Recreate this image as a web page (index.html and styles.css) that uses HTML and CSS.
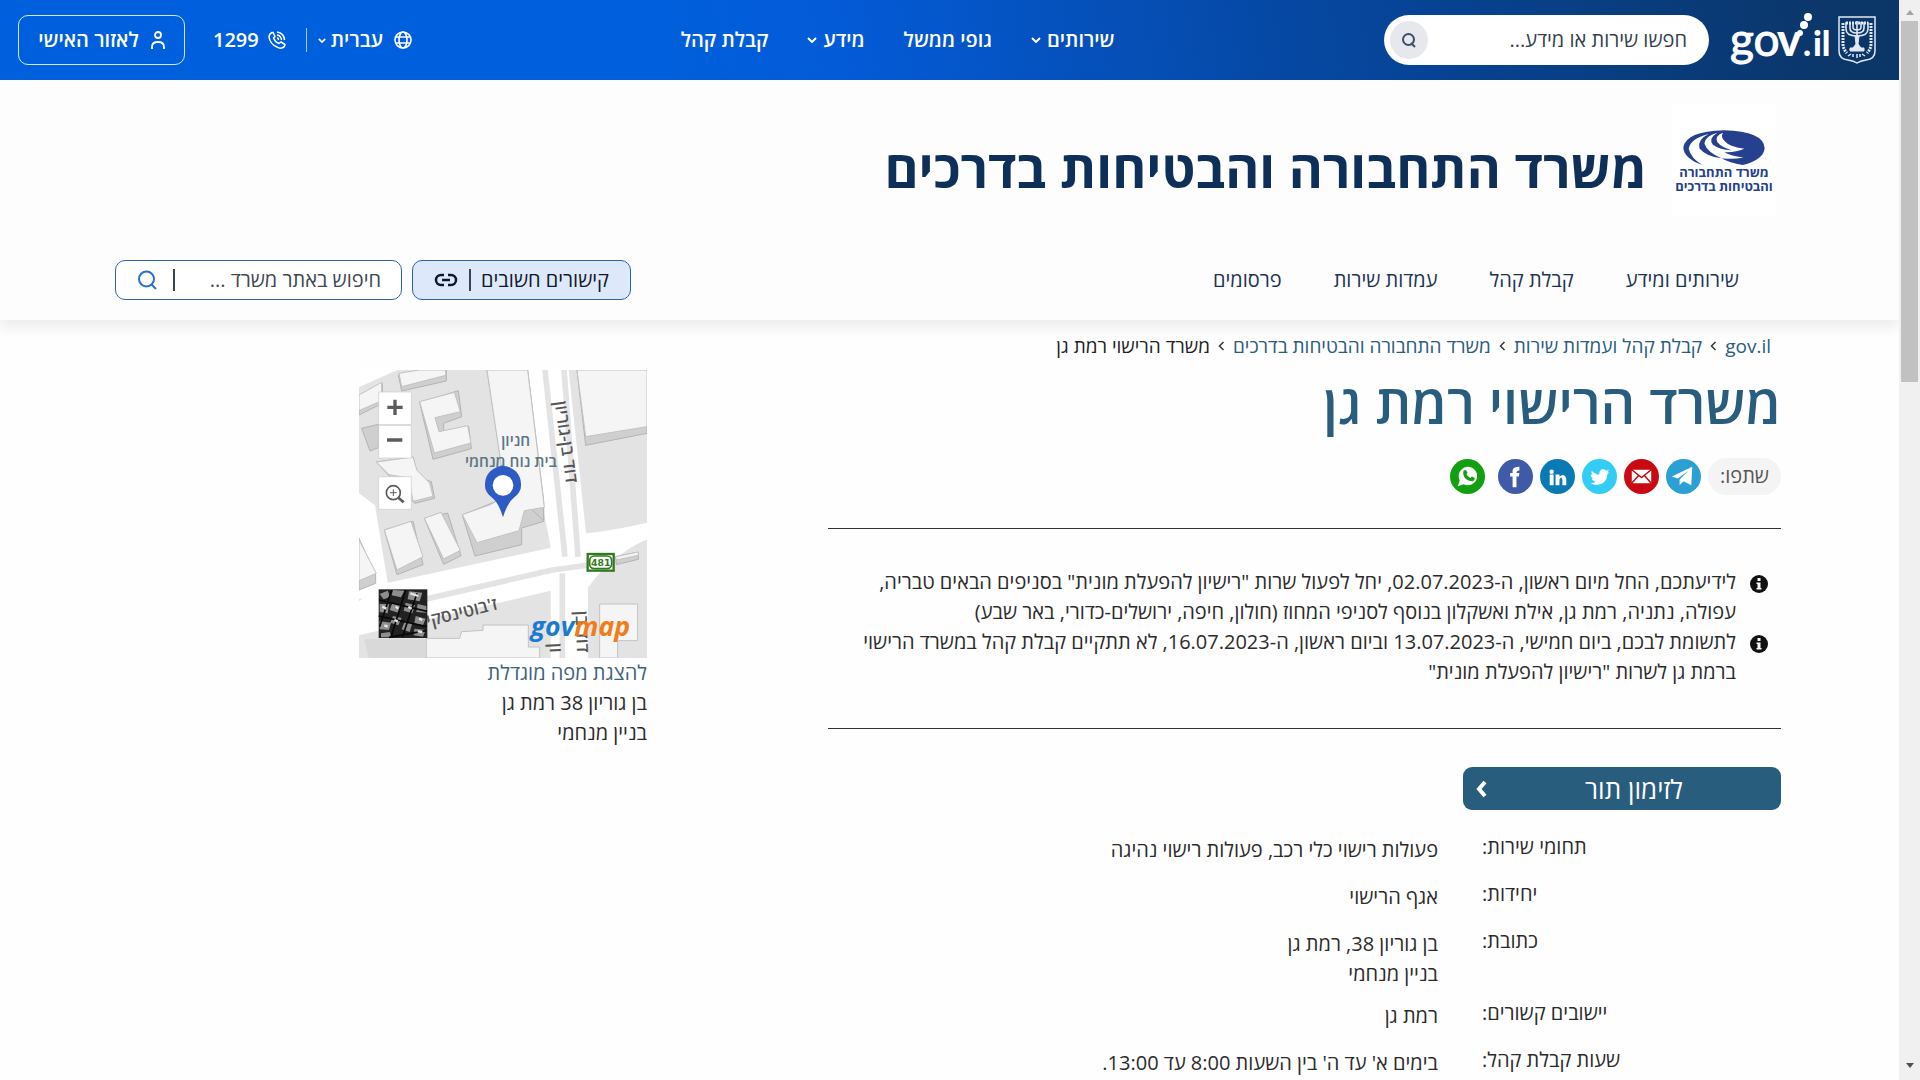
FILE: index.html
```html
<!DOCTYPE html>
<html lang="he">
<head>
<meta charset="utf-8">
<meta name="viewport" content="width=device-width, initial-scale=1">
<title>משרד הרישוי רמת גן</title>
<link rel="stylesheet" href="styles.css">
</head>
<body>
<div class="page" dir="rtl">
  <header class="topbar">
    <div class="topbar-start">
      <a class="brand" href="#" aria-label="gov.il">
        <svg class="emblem" width="38" height="48" viewBox="0 0 38 48" fill="none" stroke="#dfe8f5" aria-hidden="true">
          <path d="M1 1h36v34q0 8-9 9-6 1-9 3-3-2-9-3-9-1-9-9z" stroke-width="1.5"/>
          <path d="M8 6v7q0 7 11 7t11-7V6M12 6v6q0 5 7 5t7-5V6M15 6v5q0 3 4 3t4-3V6M19 5v24" stroke-width="1.6"/>
          <path d="M8 7h22" stroke-width="3" stroke-dasharray="2 1"/>
          <path d="M17 20h4l-1 8 3 4h-8l3-4zM12 32h14v3H12z" fill="#dfe8f5"/>
          <path d="M5 7v21q0 5 4 9M33 7v21q0 5-4 9" stroke-width="3" stroke-dasharray="2 1"/>
          <path d="M10 40l3-2m2 3v-3m4 4v-4m3 3v-3m5 2l-3-2" stroke-width="1.5"/>
        </svg>
        <svg class="govil" width="98" height="54" viewBox="0 0 98 54" direction="ltr" fill="#fff">
          <text class="logo-thin" x="-1" y="43" font-size="46">go</text>
          <text class="logo-bold" x="46" y="43" font-size="46">v</text>
          <text class="logo-bold" x="72" y="43" font-size="34">.</text>
          <text class="logo-bold" x="82" y="43" font-size="34">il</text>
          <circle cx="69" cy="20" r="3"/><circle cx="73" cy="12" r="4"/><circle cx="77" cy="4" r="4"/>
        </svg>
      </a>
      <form class="site-search" role="search">
        <input type="text" aria-label="חיפוש" placeholder="חפשו שירות או מידע...">
        <button type="button" aria-label="חפש">
          <svg width="14" height="15" viewBox="0 0 14 15" fill="none" stroke="#3c4d66" stroke-width="2"><circle cx="6.500" cy="6.500" r="5.500"/><path d="M9 10l4 4"/></svg>
        </button>
      </form>
    </div>
    <nav class="topnav" aria-label="ראשי">
      <a href="#">שירותים <svg class="chev" viewBox="0 0 10 6"><path d="M1 1l4 4 4-4"/></svg></a>
      <a href="#">גופי ממשל</a>
      <a href="#">מידע <svg class="chev" viewBox="0 0 10 6"><path d="M1 1l4 4 4-4"/></svg></a>
      <a href="#">קבלת קהל</a>
    </nav>
    <div class="topbar-end">
      <button type="button" class="lang">
        <svg width="18" height="20" viewBox="0 0 18 20" fill="none" stroke="#fff" stroke-width="1.600"><circle cx="9" cy="10" r="8"/><ellipse cx="9" cy="10" rx="4" ry="8"/><path d="M1.500 7h15M1.500 13h15"/></svg>
        עברית
        <svg class="chev small" viewBox="0 0 10 6"><path d="M1 1l4 4 4-4"/></svg>
      </button>
      <a class="phone" href="tel:1299">
        <svg width="18" height="18" viewBox="0 0 18 18" fill="none" stroke="#fff" stroke-width="1.500"><path d="M4 1.500Q1 3 1 6q1 7 8 10 3 2 6 .5 2-1 2-3l-4-2.500-2 1.500Q7 11 5.500 7L7 5.500 5 1.500z"/><path d="M9 1q7 1 7.500 8M9 4q4 .5 4.500 5M9 7q1.500 0 1.500 2"/></svg>
        1299
      </a>
      <a class="personal" href="#">
        <svg width="14" height="19" viewBox="0 0 14 19" fill="none" stroke="#fff" stroke-width="1.800"><circle cx="7" cy="4" r="3"/><path d="M1 18v-2q0-5 6-5t6 5v2"/></svg>
        לאזור האישי
      </a>
    </div>
  </header>

  <section class="office">
    <div class="office-brand">
      <a class="office-logo" href="#">
        <svg width="82" height="35" viewBox="0 0 230 104" preserveAspectRatio="none" aria-hidden="true">
          <path d="M54 104Q2 84 1 52 8 4 115 1 226 4 229 54 226 88 168 104 130 98 108 84 140 88 170 82 130 76 116 66 146 68 172 56 128 48 118 34 104 22 112 8 88 18 96 36 108 52 136 60 104 60 84 44 70 26 96 8 62 18 60 40 68 66 108 84 64 78 46 54 40 28 72 12 20 26 16 56 22 84 54 104z" fill="#25408f"/>
        </svg>
        <span>משרד התחבורה</span>
        <span>והבטיחות בדרכים</span>
      </a>
      <p class="office-name">משרד התחבורה והבטיחות בדרכים</p>
    </div>
    <div class="office-bar">
      <nav class="office-nav" aria-label="המשרד">
        <a href="#">שירותים ומידע</a>
        <a href="#">קבלת קהל</a>
        <a href="#">עמדות שירות</a>
        <a href="#">פרסומים</a>
      </nav>
      <div class="office-tools">
        <button type="button" class="links-btn">
          <span>קישורים חשובים</span><i class="bar"></i>
          <svg width="24" height="14" viewBox="0 0 24 14" fill="none" stroke="#10182b" stroke-width="2.500"><path d="M10 2H7a5 5 0 0 0 0 10h3M14 2h3a5 5 0 0 1 0 10h-3M8 7h8"/></svg>
        </button>
        <form class="office-search" role="search">
          <input type="text" aria-label="חיפוש באתר משרד" placeholder="חיפוש באתר משרד ...">
          <i class="bar"></i>
          <button type="button" aria-label="חפש"><svg width="19" height="20" viewBox="0 0 19 20" fill="none" stroke="#2a6fd0" stroke-width="2"><circle cx="8.500" cy="9" r="7.500"/><path d="M13 14l5 5"/></svg></button>
        </form>
      </div>
    </div>
  </section>

  <main class="content">
    <nav class="crumbs" aria-label="נתיב">
      <a href="#">gov.il</a><svg viewBox="0 0 6 10"><path d="M5 1L1 5l4 4"/></svg>
      <a href="#">קבלת קהל ועמדות שירות</a><svg viewBox="0 0 6 10"><path d="M5 1L1 5l4 4"/></svg>
      <a href="#">משרד התחבורה והבטיחות בדרכים</a><svg viewBox="0 0 6 10"><path d="M5 1L1 5l4 4"/></svg>
      <span>משרד הרישוי רמת גן</span>
    </nav>
    <div class="columns">
      <article class="details">
        <h1>משרד הרישוי רמת גן</h1>
        <div class="share">
          <span class="share-label">שתפו:</span>
          <a href="#" class="tg" aria-label="Telegram"><svg viewBox="0 0 36 36"><path fill="#fff" d="M6 18L27 8l-1 19-8-4-4 4v-6l9-9-11 8z"/></svg></a>
          <a href="#" class="mail" aria-label="Email"><svg viewBox="0 0 36 36"><rect x="8" y="11" width="20" height="14" rx="1" fill="#fff"/><path d="M8 11l10 8 10-8M8 25l7-8M28 25l-7-8" fill="none" stroke="#c00a12" stroke-width="1.500"/></svg></a>
          <a href="#" class="tw" aria-label="Twitter"><svg viewBox="0 0 36 36"><path fill="#fff" d="M10 12q4 4 8 4c-1-5 4-7 7-4l3-1-2 3 2 0-2 2c0 9-9 13-17 9q4 0 5-2-3 0-4-3h2q-3-1-3-4l2 .5q-2-2-1-4.500z"/></svg></a>
          <a href="#" class="li" aria-label="LinkedIn"><svg viewBox="0 0 36 36"><g fill="#fff"><circle cx="12" cy="13" r="2.300"/><path d="M10 16h4v11h-4zM16 16h4v2q5-4 7 2v7h-4v-6q-1-4-3 0v6h-4z"/></g></svg></a>
          <a href="#" class="fb" aria-label="Facebook"><svg viewBox="0 0 36 36"><path fill="#fff" d="M15 29V18h-2.500v-3.500H15q-1-7 7-6.500v4q-3-.5-3 2.500h3l-.5 3.500H19v11z"/></svg></a>
          <a href="#" class="wa" aria-label="WhatsApp"><svg viewBox="0 0 36 36"><path fill="#fff" d="M8 28l2-6a9.500 9.500 0 1 1 4 4z"/><path fill="#12a012" d="M14 12l2-1 2 3-1 2q1 2 4 3.500l1.500-1.500 3 1.500q0 3-3 3.500-8-1-9-8 0-2 .5-3z"/></svg></a>
        </div>
        <ul class="notices">
          <li><svg viewBox="0 0 18 18"><circle cx="9" cy="9" r="9" fill="#111"/><path fill="#fff" d="M7.500 3h3v3h-3zM6.500 7.500h4V13h1v1.500h-5V13h1V9h-1z"/></svg><span>לידיעתכם, החל מיום ראשון, ה-02.07.2023, יחל לפעול שרות "רישיון להפעלת מונית" בסניפים הבאים טבריה, עפולה, נתניה, רמת גן, אילת ואשקלון בנוסף לסניפי המחוז (חולון, חיפה, ירושלים-כדורי, באר שבע)</span></li>
          <li><svg viewBox="0 0 18 18"><circle cx="9" cy="9" r="9" fill="#111"/><path fill="#fff" d="M7.500 3h3v3h-3zM6.500 7.500h4V13h1v1.500h-5V13h1V9h-1z"/></svg><span>לתשומת לבכם, ביום חמישי, ה-13.07.2023 וביום ראשון, ה-16.07.2023, לא תתקיים קבלת קהל במשרד הרישוי ברמת גן לשרות "רישיון להפעלת מונית"</span></li>
        </ul>
        <a class="book" href="#"><span>לזימון תור</span><svg width="11" height="18" viewBox="0 0 11 18"><path d="M9 2L3 9l6 7" fill="none" stroke="#fff" stroke-width="4"/></svg></a>
        <dl class="facts">
          <div><dt>תחומי שירות:</dt><dd>פעולות רישוי כלי רכב, פעולות רישוי נהיגה</dd></div>
          <div><dt>יחידות:</dt><dd>אגף הרישוי</dd></div>
          <div><dt>כתובת:</dt><dd>בן גוריון 38, רמת גן<br>בניין מנחמי</dd></div>
          <div><dt>יישובים קשורים:</dt><dd>רמת גן</dd></div>
          <div><dt>שעות קבלת קהל:</dt><dd>בימים א' עד ה' בין השעות 8:00 עד 13:00.</dd></div>
        </dl>
      </article>

      <aside class="location">
        <svg class="map" viewBox="30 30 864 864" role="img" aria-label="מפה">
          <rect x="30" y="30" width="864" height="864" fill="#e3e3e3"/>
          <g fill="#fff">
            <path d="M535 30h124l52 490q90-10 183-32v50q-110 50-177 145v211H605V560L585 460z"/>
            <path d="M30 400l48 36 46 280H30zM30 30h115L30 82z"/>
            <path d="M100 672L620 560h90q90-10 184-72v50q-60 20-150 90-60 40-120 60L30 826V724z"/>
          </g>
          <path d="M645 30l42 560M588 30l60 560M110 745L610 630l110-15M640 640v254" stroke="#e3e3e3" stroke-width="17" fill="none"/>
          <g fill="#cfcfcf" stroke="#b3b3b3" stroke-width="3">
            <path d="M148 45l10 48 134-30V30h-60zM30 110l70-40v60l-70 35zM38 205l50-12v70l-25 10zM212 128l40 170 115-32-8-66-75 20v-30l54-20-10-78zM82 306l110-15 15 60 40 14 10 50-60 15z"/>
            <path d="M414 30l52 340 118 112v-60L536 30zM340 465l38 123 140-34v-50l66-20v-42l-60 7-60-34zM106 510l38 134 78-30-30-130zM226 475l58 138 52-26-40-128zM684 30l26 226 184-36V30zM30 535l50 110v25l-50 20zM800 590l68-14v22l-66 16z"/>
          </g>
          <g fill="#f5f5f5" stroke="#c2c2c2" stroke-width="3">
            <path d="M150 40l8 40 132-34V30h-80zM30 105l68-38v55l-68 30zM212 125l104-28 18 58-76 18 12 42 86-18 10 52-110 30zM82 306l110-15 12 40 38 38 10 40-60 15-12-70-60-10z"/>
            <path d="M414 30h122l50 412-60 10-16 60-126 36-44-84 84-30q56-24 34-110zM106 510l80-26 36 106-78 40zM226 475l50-18 58 114-50 26zM684 30l26 200 184-30V30zM30 540l52 100-52 22zM800 590l68-14v10l-66 14z"/>
            <path d="M232 835h100l6-20 64-4v-16h136v66h34v33H232zM752 732h114v110h-60v52h-54z"/>
          </g>
          <path d="M45 838h187v56H60z" fill="#d9d9d9"/>
          <g class="map-place"><text x="500" y="258">חניון</text><text x="486" y="320">בית נוח מנחמי</text></g>
          <g class="map-street">
            <text transform="translate(634 248) rotate(82)">דוד בן-גוריון</text>
            <text transform="translate(342 774) rotate(-14)">ז'בוטינסקי</text>
            <text transform="translate(682 816) rotate(88)">דוד בן</text>
            <text transform="translate(602 864) rotate(88)">ון</text>
          </g>
          <path d="M462 472Q450 430 428 412 406 395 408 372a54 54 0 0 1 108 0q2 23-20 40-22 18-34 60z" fill="#2c5bc4"/>
          <circle cx="462" cy="376" r="31" fill="#fff"/>
          <rect x="716" y="582" width="78" height="50" fill="#fff" stroke="#327a20" stroke-width="7"/>
          <rect x="722" y="588" width="66" height="38" rx="14" fill="#fff" stroke="#327a20" stroke-width="5"/>
          <text class="map-route" x="755" y="617">481</text>
          <g fill="#fff" stroke="#ccc" stroke-width="2"><path d="M89 96h98v98H89zM89 196h98v98H89zM89 350h98v98H89z"/></g>
          <g fill="none" stroke="#5c5c5c"><path d="M115 142h46M138 119v46M114 240h46" stroke-width="10"/><circle cx="133" cy="398" r="21" stroke-width="5"/><path d="M148 413l16 14" stroke-width="8"/><path d="M123 398h20M133 388v20" stroke-width="3"/></g>
          <g><rect x="89" y="688" width="146" height="146" fill="#222"/>
            <g fill="#8e8e8e"><path d="M92 702l24-10 8 18-20 8zM132 690l34 2-10 20-28-6zM180 694l40 4-8 26-36-6zM92 732l28 0-4 28-24-4zM130 730l26 6-8 22-26-8zM170 728l28 8-8 24-26-8zM206 732l26 6v20l-30-2zM92 784l34 4-6 22-28-2zM132 768l26 6-10 22-24-8zM168 782l22 8-8 26-24-8zM200 768l30 8-8 20-26-6zM96 820l26-4 6 16H96zM196 806l34 4-8 20-28-4z"/></g>
            <path d="M90 720l144 34M89 768l144 32M128 690L92 800M170 690l-44 142M204 700l-44 132M120 832l112-20" stroke="#080808" stroke-width="5"/>
            <path d="M100 740l12 6M140 740l8 6M184 700l24 8M106 796l10 4M178 740l10 6M206 814l14 2M136 780l10 4M210 776l10 4" stroke="#e5e5e5" stroke-width="7"/>
          </g>
          <text class="map-logo" direction="ltr" x="545" y="828"><tspan fill="#1c7bd0">gov</tspan><tspan fill="#ee7d1a">map</tspan></text>
        </svg>
        <a href="#">להצגת מפה מוגדלת</a>
        <p>בן גוריון 38 רמת גן<br>בניין מנחמי</p>
      </aside>
    </div>
  </main>
</div>
<div class="scroll" aria-hidden="true">
  <svg viewBox="0 0 8 5"><path d="M0 5l4-5 4 5z" fill="#a3a3a3"/></svg>
  <div class="thumb"></div>
  <svg class="down" viewBox="0 0 8 5"><path d="M0 0l4 5 4-5z" fill="#505050"/></svg>
</div>
</body>
</html>
```
FILE: styles.css
```css
* { box-sizing: border-box; }
body {
  margin: 0;
  display: flex;
  align-items: flex-start;
  background: #fefefe;
  color: #2b2b2b;
  font: 20px/30px "Open Sans", "DejaVu Sans", sans-serif;
}
a { color: inherit; text-decoration: none; }
button, input { font: inherit; color: inherit; border: 0; background: none; padding: 0; margin: 0; }
p, h1, ul, dl, dd { margin: 0; padding: 0; }
svg { flex: none; display: block; }

.page { flex: 1; min-width: 0; height: 100vh; overflow: hidden; }

.topbar {
  display: grid;
  grid-template-columns: 763fr auto 664fr;
  align-items: center;
  height: 80px;
  padding: 0 23px 0 18px;
  color: #fff;
  font-weight: 600;
  background: linear-gradient(260deg, #0b3668 3%, #06459a 28%, #045bd8 56%, #005fdc 65%);
}
.topbar-start, .topbar-end { display: flex; align-items: center; }
.brand { display: flex; gap: 9px; align-items: center; }
.govil { overflow: visible; }
.logo-thin { font-family: Lato, sans-serif; font-weight: 400; stroke: #fff; stroke-width: 1px; }
.logo-bold { font-family: Lato, sans-serif; font-weight: 900; }
.site-search {
  display: flex; align-items: center;
  width: 325px; height: 50px;
  margin-inline-start: 22px;
  padding: 0 22px 0 6px;
  border-radius: 25px;
  background: #fff;
  font-weight: 400;
}
.site-search input { flex: 1; min-width: 0; outline: 0; }
.site-search input::placeholder { color: #333f50; opacity: 1; }
.site-search button { display: grid; place-items: center; width: 38px; height: 38px; border-radius: 50%; background: #e6e8ee; }
.topnav { display: flex; gap: 39px; }
.topnav a { display: flex; align-items: center; gap: 6px; }
.chev { width: 10px; height: 6px; fill: none; stroke: #fff; stroke-width: 2; }
.chev.small { width: 8px; height: 5px; }
.topbar-end { justify-content: flex-end; }
.lang { display: flex; align-items: center; gap: 5px; line-height: 24px; padding-inline-end: 11px; border-inline-end: 1px solid #a9c8f2; }
.lang svg:first-child { margin-inline-end: 6px; }
.phone { display: flex; align-items: center; gap: 9px; margin-inline: 20px 28px; }
.personal {
  display: flex; align-items: center; justify-content: center; gap: 12px;
  width: 167px; height: 50px;
  border: 1px solid #d5e6fb; border-radius: 10px;
}

.office { background: #fdfdfd; min-height: 240px; box-shadow: 0 8px 12px #00000012; padding: 25px 118px 0 115px; }
.office-brand { display: flex; align-items: center; }
.office-logo {
  display: flex; flex-direction: column; align-items: center;
  width: 104px; height: 110px; padding-top: 25px; margin-inline-start: 5px;
  background: #fff; color: #25408f;
  font-size: 13px; line-height: 14px; font-weight: 700;
}
.office-name { margin-inline-start: 25px; padding-top: 16px; font-size: 52px; line-height: 70px; font-weight: 700; color: #0e3058; }
.office-bar { display: flex; justify-content: space-between; align-items: center; height: 40px; margin-top: 45px; padding-right: 42px; color: #1c3454; }
.office-nav { display: flex; gap: 52px; }
.office-tools { display: flex; gap: 10px; }
.links-btn, .office-search { display: flex; align-items: center; height: 40px; border: 1px solid #2a64a8; border-radius: 10px; }
.links-btn { width: 219px; padding: 0 21px; justify-content: space-between; background: #dde9fa; color: #10182b; }
.bar { width: 2px; height: 22px; background: #3a4255; }
.office-search { width: 287px; padding: 0 20px 0 22px; gap: 16px; background: #fff; }
.office-search input { flex: 1; min-width: 0; outline: 0; }
.office-search input::placeholder { color: #3f4652; opacity: 1; }

.content { padding: 11px 118px 0 115px; }
.crumbs { display: flex; align-items: center; gap: 8px; padding-right: 10px; font-size: 19px; color: #2a5c7d; }
.crumbs svg { width: 7px; height: 10px; fill: none; stroke: #333; stroke-width: 1.5; }
.crumbs span { color: #222; }
.columns { display: flex; justify-content: space-between; }
.details { width: 57.2%; padding-top: 6px; }
h1 { font-size: 54px; line-height: 72px; font-weight: 600; color: #285d7e; }
.share { display: flex; align-items: center; gap: 7px; height: 37px; margin-top: 19px; }
.share a { width: 35px; height: 35px; border-radius: 50%; }
.share-label { width: 73px; height: 37px; line-height: 36px; border-radius: 18px; background: #f4f4f4; text-align: center; color: #555; }
.tg { background: #2ba0d5; } .mail { background: #c90a12; } .tw { background: #33ccf5; }
.li { background: #0a7ab5; } .fb { background: #3f5ba8; } .wa { background: #12a012; margin-inline-start: 6px; }
.notices { list-style: none; margin-top: 33px; padding: 38px 13px 41px 0; border: solid #333; border-width: 1px 0; }
.notices li { display: flex; gap: 14px; }
.notices svg { width: 18px; height: 18px; margin-top: 8px; }
.book {
  display: flex; align-items: center;
  width: 318px; height: 43px; margin-top: 38px; padding-left: 13px;
  border-radius: 9px; background: #295d7e; color: #fff; font-size: 26px;
}
.book span { flex: 1; text-align: center; }
.facts { margin-top: 22px; }
.facts div { display: grid; grid-template-columns: 299px 1fr; column-gap: 44px; min-height: 47px; padding-bottom: 9px; }
.facts dt { text-align: left; }
.facts dd { padding-top: 3px; }

.location { width: 531px; margin-top: -6px; padding-top: 15px; }
.columns .location { margin-left: 1px; }
.map { width: 288px; height: 288px; }
.location a { display: block; color: #3c6379; }
.map-place text { font: 600 46px "Open Sans", sans-serif; fill: #5b7686; text-anchor: middle; }
.map-street text { font: 600 52px "Open Sans", sans-serif; fill: #555; text-anchor: middle; }
.map-route { font: 700 28px "DejaVu Sans", sans-serif; fill: #327a20; text-anchor: middle; }
.map-logo { font: italic 700 80px "Open Sans", sans-serif; text-anchor: start; }

.scroll { position: sticky; top: 0; display: flex; flex-direction: column; align-items: center; width: 21px; height: 100vh; padding: 10px 2px 12px; background: #f0f0f0; }
.scroll svg { width: 8px; height: 5px; }
.thumb { width: 17px; height: 361px; margin-top: 6px; background: #c1c1c1; }
.scroll .down { margin-top: auto; }
```
